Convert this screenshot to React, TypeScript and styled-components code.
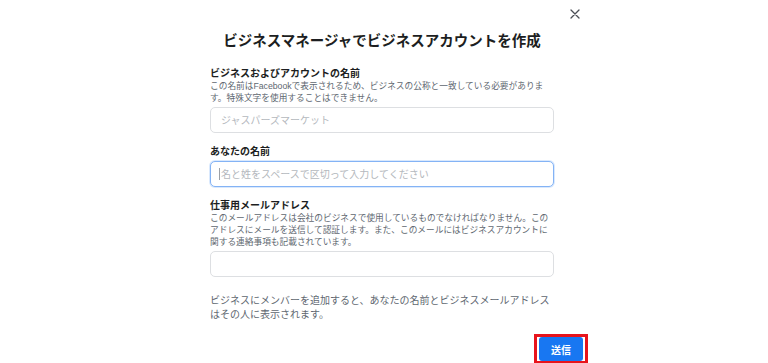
import React from "react";
import styled, { createGlobalStyle } from "styled-components";

const GlobalStyle = createGlobalStyle`
  html, body {
    margin: 0;
    padding: 0;
    background: #ffffff;
    overflow: hidden;
  }
  body {
    font-family: "Liberation Sans", "Noto Sans CJK JP", sans-serif;
    color: #1c1e21;
  }
`;

const Dialog = styled.div`
  width: 408px;
  margin-left: 180px;
  display: flex;
  flex-direction: column;
`;

const CloseRow = styled.div`
  height: 28px;
  display: flex;
  align-items: center;
  justify-content: flex-end;
  padding-right: 7px;
`;

const CloseButton = styled.button`
  width: 12px;
  height: 12px;
  padding: 0;
  border: none;
  background: transparent;
  display: flex;
  align-items: center;
  justify-content: center;
  cursor: pointer;
`;

const Content = styled.div`
  width: 344px;
  padding-left: 30px;
  display: flex;
  flex-direction: column;
`;

const Title = styled.h1`
  margin: 3px 0 0;
  font-size: 14.5px;
  line-height: 20px;
  font-weight: 700;
  text-align: center;
  white-space: nowrap;
  color: #1c1e21;
`;

const Field = styled.div`
  display: flex;
  flex-direction: column;
  margin-top: ${(p: { $gap: number }) => p.$gap}px;
`;

const Label = styled.label`
  font-size: 10px;
  line-height: 13px;
  font-weight: 700;
  color: #1c1e21;
`;

const Help = styled.div`
  font-size: 8.7px;
  line-height: 12px;
  color: #606770;
  white-space: nowrap;
`;

const InputWrap = styled.div`
  position: relative;
  margin-top: 3px;
`;

const TextInput = styled.input<{ $focused?: boolean }>`
  box-sizing: border-box;
  width: 100%;
  height: 26px;
  margin: 0;
  padding: 0 10px;
  border-radius: 5px;
  border: 1px solid ${(p) => (p.$focused ? "#84b3f5" : "#dddfe2")};
  box-shadow: ${(p) => (p.$focused ? "0 0 0 1px rgba(24, 119, 242, 0.16)" : "none")};
  font-family: "Liberation Sans", "Noto Sans CJK JP", sans-serif;
  font-size: 10px;
  color: #1c1e21;
  outline: none;
  background: #fff;
  &::placeholder {
    color: #b4b8bd;
  }
`;

const Caret = styled.span`
  position: absolute;
  left: 9px;
  top: 7px;
  width: 1px;
  height: 12px;
  background: #9ba0a6;
`;

const Note = styled.p`
  margin: 17px 0 0;
  font-size: 10px;
  line-height: 14px;
  color: #606770;
  white-space: nowrap;
`;

const Footer = styled.div`
  display: flex;
  justify-content: flex-end;
  margin-top: 12px;
`;

const Highlight = styled.div`
  border: 3px solid #e8141c;
  padding: 0 2px;
  display: flex;
`;

const SubmitButton = styled.button`
  width: 44px;
  height: 24px;
  border: none;
  border-radius: 3px;
  background: #1877f2;
  color: #ffffff;
  font-family: "Liberation Sans", "Noto Sans CJK JP", sans-serif;
  font-size: 10px;
  font-weight: 700;
  padding: 0;
  cursor: pointer;
`;

const App: React.FC = () => {
  return (
    <>
      <GlobalStyle />
      <Dialog>
        <CloseRow>
          <CloseButton aria-label="閉じる">
            <svg width="10" height="10" viewBox="0 0 10 10">
              <path d="M1 1 L9 9 M9 1 L1 9" stroke="#4b4f56" strokeWidth="1.3" strokeLinecap="round" />
            </svg>
          </CloseButton>
        </CloseRow>
        <Content>
          <Title>ビジネスマネージャでビジネスアカウントを作成</Title>

          <Field $gap={16}>
            <Label>ビジネスおよびアカウントの名前</Label>
            <Help>
              この名前はFacebookで表示されるため、ビジネスの公称と一致している必要がありま
              <br />
              す。特殊文字を使用することはできません。
            </Help>
            <InputWrap>
              <TextInput placeholder="ジャスパーズマーケット" />
            </InputWrap>
          </Field>

          <Field $gap={12}>
            <Label>あなたの名前</Label>
            <InputWrap>
              <TextInput $focused placeholder="名と姓をスペースで区切って入力してください" />
              <Caret />
            </InputWrap>
          </Field>

          <Field $gap={12}>
            <Label>仕事用メールアドレス</Label>
            <Help>
              このメールアドレスは会社のビジネスで使用しているものでなければなりません。この
              <br />
              アドレスにメールを送信して認証します。また、このメールにはビジネスアカウントに
              <br />
              関する連絡事項も記載されています。
            </Help>
            <InputWrap>
              <TextInput />
            </InputWrap>
          </Field>

          <Note>
            ビジネスにメンバーを追加すると、あなたの名前とビジネスメールアドレス
            <br />
            はその人に表示されます。
          </Note>
        </Content>
        <Footer>
          <Highlight>
            <SubmitButton>送信</SubmitButton>
          </Highlight>
        </Footer>
      </Dialog>
    </>
  );
};

export default App;
